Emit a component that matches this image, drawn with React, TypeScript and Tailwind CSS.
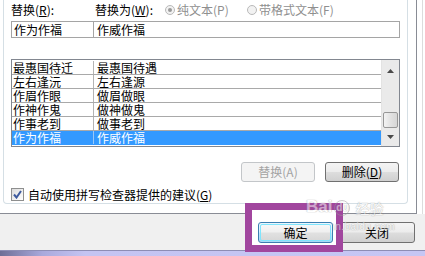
import React from "react";

const rows: [string, string][] = [
  ["最惠国待迁", "最惠国待遇"],
  ["左右逢沅", "左右逢源"],
  ["作眉作眼", "做眉做眼"],
  ["作神作鬼", "做神做鬼"],
  ["作事老到", "做事老到"],
];

function Radio({ checked }: { checked?: boolean }) {
  return (
    <span className="w-[10px] h-[10px] rounded-full border border-[#b9b9b9] bg-[#f2f2f2] flex items-center justify-center">
      {checked ? <span className="w-[4px] h-[4px] rounded-full bg-[#9a9a9a]" /> : null}
    </span>
  );
}

function WinButton({ children, disabled }: { children: React.ReactNode; disabled?: boolean }) {
  return disabled ? (
    <div className="w-[74px] h-[20px] rounded-[3px] border border-[#c3c6c9] bg-[#f4f4f4] text-[#a3a3a3] flex items-center justify-center">
      {children}
    </div>
  ) : (
    <div className="w-[74px] h-[20px] rounded-[3px] border border-[#707070] bg-[linear-gradient(#f4f4f4_0%,#ececec_48%,#dddddd_52%,#d0d0d0_100%)] text-black flex items-center justify-center">
      {children}
    </div>
  );
}

export default function App() {
  return (
    <div className="relative w-[425px] h-[256px] overflow-hidden bg-[#f0f0f0] text-[12px] leading-[14px] text-black font-['Noto_Sans_CJK_SC',sans-serif]">
      {/* top tab page */}
      <div className="flex h-[214px]">
        <div className="w-[417px] h-[214px] bg-white border-r border-b border-[#898c95] pl-[3px]">
          <div className="w-[405px] h-[204px] border border-t-0 border-[#d5dfe5] rounded-b-[4px] pl-[7px] flex flex-col">
            {/* labels */}
            <div className="mt-[3px] h-[14px] flex items-center">
              <span className="w-[84px]">
                替换(<span className="underline">R</span>):
              </span>
              <span className="w-[70px]">
                替换为(<span className="underline">W</span>):
              </span>
              <span className="flex items-center gap-[2px] w-[82px] text-[#8f8f8f]">
                <Radio checked />
                <span>纯文本(P)</span>
              </span>
              <span className="flex items-center gap-[2px] text-[#8f8f8f]">
                <Radio />
                <span>带格式文本(F)</span>
              </span>
            </div>
            {/* inputs */}
            <div className="mt-[4px] w-[389px] h-[17px] border border-[#a5a5a5] flex items-center leading-[13px]">
              <div className="w-[82px] h-full border-r border-[#a5a5a5] pl-[2px] flex items-center">作为作福</div>
              <div className="pl-[3px] flex items-center">作威作福</div>
            </div>
            {/* list */}
            <div className="mt-[21px] w-[389px] h-[88px] border border-[#828790] flex leading-[13px]">
              <div className="w-[369px] flex flex-col">
                {rows.map(([a, b], i) => (
                  <div
                    key={i}
                    className={`flex border-b border-[#a9a9a9] ${i === 0 ? "h-[15px] pt-[1px]" : "h-[14px]"}`}
                  >
                    <div className="w-[82px] h-[13px] pl-[1px] border-r border-[#b4b4b4] flex items-center">{a}</div>
                    <div className="h-[13px] pl-[3px] flex items-center">{b}</div>
                  </div>
                ))}
                <div className="flex h-[14px] bg-[#3399ff] text-white">
                  <div className="w-[82px] h-[13px] pl-[1px] border-r border-[#9cc8f5] flex items-center">作为作福</div>
                  <div className="h-[13px] pl-[3px] flex items-center">作威作福</div>
                </div>
              </div>
              {/* scrollbar */}
              <div className="w-[18px] bg-[#eaeaea] border-l border-[#e3e3e3] flex flex-col items-center">
                <div className="h-[22px] flex items-center justify-center">
                  <svg width="7" height="4" viewBox="0 0 7 4">
                    <path d="M3.5 0 L7 4 L0 4 Z" fill="#4a4a4a" />
                  </svg>
                </div>
                <div className="flex-1" />
                <div className="w-[15px] h-[16px] rounded-[2px] border border-[#979797] bg-[linear-gradient(90deg,#f3f3f3,#e2e2e2_50%,#d6d6d6)]" />
                <div className="h-[18px] flex items-center justify-center">
                  <svg width="7" height="4" viewBox="0 0 7 4">
                    <path d="M0 0 L7 0 L3.5 4 Z" fill="#4a4a4a" />
                  </svg>
                </div>
              </div>
            </div>
            {/* buttons */}
            <div className="mt-[15px] w-[388px] flex justify-end gap-[10px]">
              <WinButton disabled>替换(A)</WinButton>
              <WinButton>
                删除(<span className="underline">D</span>)
              </WinButton>
            </div>
            {/* checkbox */}
            <div className="mt-[6px] h-[13px] flex items-center gap-[4px]">
              <span className="w-[13px] h-[13px] border border-[#8e8f8f] bg-[linear-gradient(135deg,#dcdcdc,#ffffff)] flex items-center justify-center">
                <svg width="9" height="9" viewBox="0 0 9 9">
                  <path d="M1 4.5 L3.5 7.5 L8 1" stroke="#3d5a9e" strokeWidth="2" fill="none" />
                </svg>
              </span>
              <span>
                自动使用拼写检查器提供的建议(<span className="underline">G</span>)
              </span>
            </div>
          </div>
        </div>
        <div className="flex-1 bg-white flex justify-end pr-[2px]">
          <div className="w-[1px] h-full bg-[#dcdcdc]" />
        </div>
      </div>

      {/* bottom bar */}
      <div className="h-[36px] flex justify-end items-start pt-[8px] pr-[10px] gap-[6px]">
        <div className="relative z-10 w-[75px] h-[21px] rounded-[3px] border border-[#3c7fb1] bg-[linear-gradient(#eaf6fd_0%,#d9f0fc_48%,#bee6fd_52%,#a7d9f5_100%)] p-[1px]">
          <div className="w-full h-full rounded-[2px] border border-[#7fe5fd] bg-[linear-gradient(#f7f7f7_0%,#efefef_48%,#e1e1e1_52%,#d8d8d8_100%)] flex items-center justify-center">
            确定
          </div>
        </div>
        <div className="w-[76px] h-[21px] rounded-[3px] border border-[#707070] bg-[linear-gradient(#f4f4f4_0%,#ececec_48%,#dddddd_52%,#d0d0d0_100%)] flex items-center justify-center">
          关闭
        </div>
      </div>
      <div className="h-[6px] bg-[linear-gradient(90deg,#6e6e96_0%,#a9a9dc_10%,#c4c4f2_20%,#c6c6f4_100%)] border-t border-[#8d8db5]" />

      {/* annotation frame */}
      <div className="absolute left-[245px] top-[203px] w-[98px] h-[49px] border-[7px] border-[#a1469e] bg-white" />

      {/* watermark */}
      <div className="absolute left-[306px] top-[198px] pointer-events-none opacity-50 text-white [text-shadow:0_0_1px_#777,0_0_1px_#777]">
        <div className="flex items-end gap-[2px]">
          <span className="text-[17px] leading-[18px] font-['Liberation_Sans',sans-serif] font-bold">Bai</span>
          <span className="w-[16px] h-[16px] rounded-full border border-[#999] flex items-center justify-center text-[10px] leading-[10px] font-['Liberation_Sans',sans-serif] font-bold">du</span>
          <span className="text-[14px] leading-[15px] ml-[3px]">经验</span>
        </div>
        <div className="mt-[6px] text-[10px] leading-[10px] font-['Liberation_Sans',sans-serif] tracking-[0.5px]">jingyan.baidu.com</div>
      </div>
    </div>
  );
}
